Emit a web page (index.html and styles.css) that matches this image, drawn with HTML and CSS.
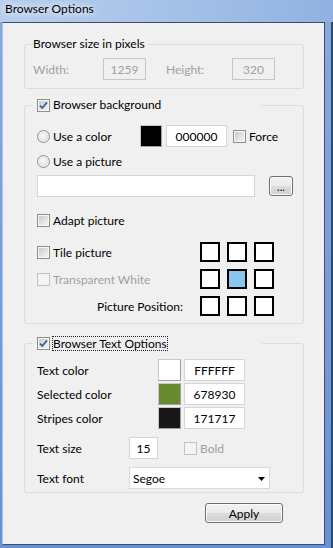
FILE: index.html
```html
<!DOCTYPE html>
<html>
<head>
<meta charset="utf-8">
<link rel="stylesheet" href="styles.css">
</head>
<body>
<div class="window">
  <div class="titlebar"><span class="title">Browser Options</span></div>
  <div class="frame">
    <div class="client">
      <fieldset class="group g1">
        <legend class="legend-text">Browser size in pixels</legend>
        <div class="g1-body">
          <span class="dis lbl-w">Width:</span>
          <span class="field field-dis">1259</span>
          <span class="dis lbl-h">Height:</span>
          <span class="field field-dis">320</span>
        </div>
      </fieldset>

      <fieldset class="group g2">
        <legend class="legend-check"><span class="legend-inner"><span class="chk"><svg width="11" height="11" viewBox="0 0 11 11"><path d="M2 5.6 L4.3 8 L9 2.4" fill="none" stroke="#3c5a93" stroke-width="1.7"/></svg></span><span>Browser background</span></span></legend>
        <div class="g2-body">
          <div class="row">
            <span class="opt opt-color"><span class="radio"></span>Use a color</span>
            <span class="swatch sw-black"></span>
            <span class="field hex">000000</span>
            <span class="opt"><span class="chk chk-force"></span>Force</span>
          </div>
          <div class="row row-gap3">
            <span class="opt"><span class="radio"></span>Use a picture</span>
          </div>
          <div class="row row-gap3">
            <span class="field path"></span>
            <span class="btn btn-dots">...</span>
          </div>
          <div class="row row-adapt">
            <span class="opt"><span class="chk"></span>Adapt picture</span>
          </div>
          <div class="pos-grid">
            <span class="opt"><span class="chk"></span>Tile picture</span>
            <span class="cell"></span><span class="cell"></span><span class="cell"></span>
            <span class="opt dis"><span class="chk chk-dis"></span>Transparent White</span>
            <span class="cell"></span><span class="cell cell-sel"></span><span class="cell"></span>
            <span class="pos-label">Picture Position:</span>
            <span class="cell"></span><span class="cell"></span><span class="cell"></span>
          </div>
        </div>
      </fieldset>

      <fieldset class="group g3">
        <legend class="legend-check"><span class="legend-inner"><span class="chk"><svg width="11" height="11" viewBox="0 0 11 11"><path d="M2 5.6 L4.3 8 L9 2.4" fill="none" stroke="#3c5a93" stroke-width="1.7"/></svg></span><span class="focus">Browser Text Options</span></span></legend>
        <div class="g3-body">
          <div class="row">
            <span class="lbl-c">Text color</span>
            <span class="swatch sw-white"></span>
            <span class="field hex2">FFFFFF</span>
          </div>
          <div class="row row-gap2">
            <span class="lbl-c">Selected color</span>
            <span class="swatch sw-green"></span>
            <span class="field hex2">678930</span>
          </div>
          <div class="row row-gap2">
            <span class="lbl-c">Stripes color</span>
            <span class="swatch sw-dark"></span>
            <span class="field hex2">171717</span>
          </div>
          <div class="row row-gap8">
            <span class="lbl-s">Text size</span>
            <span class="field size">15</span>
            <span class="opt dis"><span class="chk chk-dis"></span>Bold</span>
          </div>
          <div class="row row-gap8">
            <span class="lbl-s">Text font</span>
            <span class="field select"><span>Segoe</span><svg class="arrow" width="7" height="4" viewBox="0 0 7 4"><path d="M0 0 H7 L3.5 4 Z" fill="#000"/></svg></span>
          </div>
        </div>
      </fieldset>

      <div class="actions">
        <span class="btn btn-apply">Apply</span>
      </div>
    </div>
  </div>
</div>
</body>
</html>
```

FILE: styles.css
```css
html, body {
  margin: 0;
  padding: 0;
}
body {
  width: 333px;
  height: 548px;
  overflow: hidden;
  font-family: Lato, "Open Sans", sans-serif;
  font-size: 12px;
  color: #000;
}
.window {
  width: 333px;
  height: 548px;
  display: flex;
  flex-direction: column;
  background: #6b94d8;
}
.titlebar {
  height: 22px;
  flex: none;
  box-sizing: border-box;
  padding: 1px 0 0 5px;
  background: linear-gradient(90deg, #b7ceec 0%, #a8c3e9 45%, #90b2e1 100%);
}
.title {
  display: inline-block;
  line-height: 16px;
  text-shadow: 0 0 6px #fff, 0 0 10px rgba(255,255,255,0.8);
}
.frame {
  flex: 1;
  box-shadow: inset -2px 0 0 #2e4b62;
  background: linear-gradient(180deg, #86a9de 0%, #6890d6 100%);
}
.client {
  margin-left: 2px;
  width: 323px;
  height: 523px;
  box-sizing: border-box;
  border: 1px solid #3d4f6c;
  border-left-color: #a9c4ec;
  background: #f0f0f0;
  padding: 13px 0 0 21px;
}
.group {
  margin: 0;
  padding: 0;
  width: 280px;
  min-width: 0;
  box-sizing: border-box;
  border: 1px solid #d5dfe5;
  border-radius: 3px;
}
.legend-text {
  margin-left: 8px;
  padding: 0 3px 0 0;
  height: 16px;
  line-height: 16px;
}
.legend-check {
  margin-left: 8px;
  padding: 0 0 0 4px;
  width: 229px;
  box-sizing: border-box;
  height: 16px;
}
.legend-inner {
  display: flex;
  align-items: center;
  height: 16px;
  line-height: 16px;
}
.focus {
  border: 1px dotted #222;
  line-height: 13px;
  padding: 0;
  margin-left: -1px;
}
.dis { color: #a0a0a0; }

/* group 1 */
.g1-body {
  display: flex;
  align-items: center;
  padding: 6px 0 8px 8px;
}
.lbl-w { width: 70px; }
.lbl-h { width: 66px; margin-left: 20px; }
.field {
  display: flex;
  align-items: center;
  justify-content: center;
  box-sizing: border-box;
  height: 22px;
  background: #fff;
  border: 1px solid #d6d6d6;
  flex: none;
}
.field-dis {
  width: 43px;
  background: #f0f0f0;
  border-color: #c6c6c6;
  color: #a0a0a0;
}

/* controls */
.opt {
  display: flex;
  align-items: center;
  white-space: nowrap;
}
.chk, .radio {
  width: 13px;
  height: 13px;
  box-sizing: border-box;
  flex: none;
  margin-right: 3px;
}
.chk {
  border: 1px solid #8e8f8f;
  background: linear-gradient(135deg, #c3c7cd 0%, #e4e5e7 60%, #f4f4f4 100%);
  box-shadow: inset 0 0 0 1px #f6f6f6;
  display: flex;
}
.chk svg { display: block; }
.chk-dis {
  border-color: #c2c2c2;
  background: #f4f4f4;
  box-shadow: none;
}
.radio {
  border-radius: 50%;
  border: 1px solid #8e8f8f;
  background: radial-gradient(circle at 45% 45%, #fdfdfd 0%, #e6e7e8 45%, #c4c7ca 100%);
  box-shadow: inset 0 0 0 1px #f2f2f2;
}
.swatch {
  box-sizing: border-box;
  height: 22px;
  flex: none;
  border: 1px solid;
  border-color: #c8c8c8 #a0a0a0 #a0a0a0 #c8c8c8;
}
.btn {
  display: flex;
  align-items: center;
  justify-content: center;
  box-sizing: border-box;
  border: 1px solid #707070;
  border-radius: 3px;
  background: linear-gradient(180deg, #f2f2f2 0%, #ebebeb 50%, #dddddd 51%, #cfcfcf 100%);
  box-shadow: inset 0 0 0 1px #fbfbfb;
  flex: none;
}

/* group 2 */
.g2 { margin-top: 8px; }
.g2-body {
  display: flex;
  flex-direction: column;
  padding: 12px 0 7px 12px;
}
.row {
  display: flex;
  align-items: center;
  height: 22px;
}
.row-gap3 { margin-top: 3px; }
.row-gap2 { margin-top: 2px; }
.row-gap8 { margin-top: 8px; }
.row-adapt { margin-top: 13px; height: 20px; }
.opt-color { width: 103px; }
.sw-black { width: 22px; background: #000; margin-right: 4px; }
.hex { width: 61px; margin-right: 6px; }
.chk-force { margin-right: 3px; }
.path { width: 218px; margin-right: 14px; }
.btn-dots {
  width: 24px;
  height: 20px;
  line-height: 10px;
  font-size: 11px;
  padding-top: 2px;
}
.pos-grid {
  margin-top: 12px;
  display: grid;
  grid-template-columns: 156px 20px 20px 20px;
  grid-auto-rows: 20px;
  column-gap: 7px;
  row-gap: 7px;
  align-items: center;
}
.cell {
  width: 20px;
  height: 20px;
  box-sizing: border-box;
  border: 2px solid #000;
  background: #fff;
}
.cell-sel { background: #88c6ee; }
.pos-label {
  justify-self: end;
  margin-right: 10px;
}

/* group 3 */
.g3 { margin-top: 11px; }
.g3-body {
  display: flex;
  flex-direction: column;
  padding: 8px 0 3px 12px;
}
.lbl-c { width: 121px; flex: none; }
.sw-white { width: 23px; background: #fff; margin-right: 3px; }
.sw-green { width: 23px; background: #678930; margin-right: 3px; }
.sw-dark { width: 23px; background: #171717; margin-right: 3px; }
.hex2 { width: 61px; }
.lbl-s { width: 92px; flex: none; }
.size { width: 29px; margin-right: 26px; }
.select {
  width: 141px;
  justify-content: space-between;
  padding: 0 4px 0 3px;
  border-color: #dadada;
}
.arrow { display: block; margin-top: 2px; }

/* actions */
.actions {
  margin-top: 10px;
  padding-left: 181px;
  display: flex;
}
.btn-apply {
  width: 78px;
  height: 20px;
}
```
